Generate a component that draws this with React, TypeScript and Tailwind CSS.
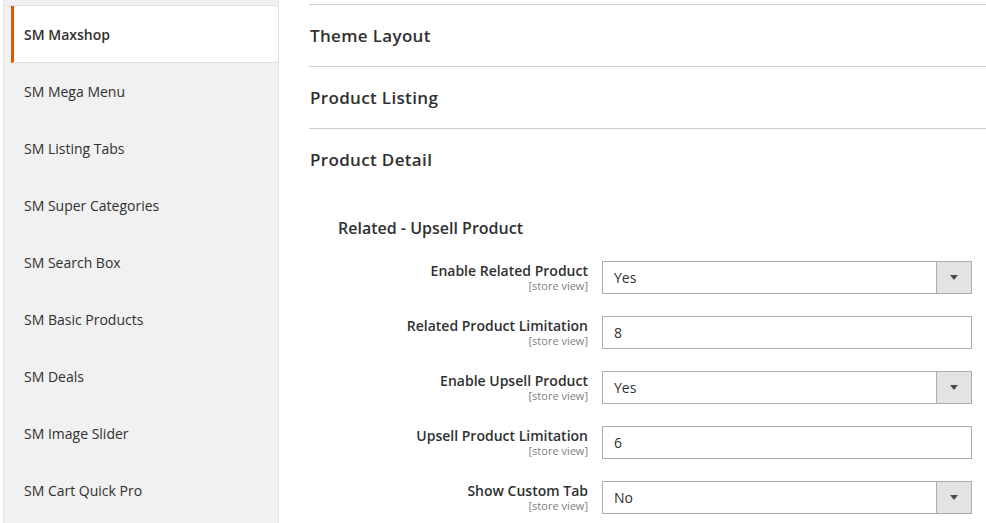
const tabs = [
  "SM Mega Menu",
  "SM Listing Tabs",
  "SM Super Categories",
  "SM Search Box",
  "SM Basic Products",
  "SM Deals",
  "SM Image Slider",
  "SM Cart Quick Pro",
];

const rows = [
  { label: "Enable Related Product", value: "Yes", select: true },
  { label: "Related Product Limitation", value: "8", select: false },
  { label: "Enable Upsell Product", value: "Yes", select: true },
  { label: "Upsell Product Limitation", value: "6", select: false },
  { label: "Show Custom Tab", value: "No", select: true },
];

function Field({ value, select }: { value: string; select: boolean }) {
  return (
    <div className="flex h-[33px] w-[370px] border border-[#adadad] bg-white">
      <div className="flex flex-1 items-center px-[11px] text-[14px] text-[#303030]">{value}</div>
      {select && (
        <div className="flex w-[35px] items-center justify-center border-l border-[#adadad] bg-[#e3e3e3]">
          <svg width="8" height="5" viewBox="0 0 8 5">
            <path d="M0 0h8L4 5z" fill="#514943" />
          </svg>
        </div>
      )}
    </div>
  );
}

export default function App() {
  return (
    <div
      className="flex h-[523px] w-[986px] overflow-hidden bg-white text-[#303030]"
      style={{ fontFamily: '"Open Sans", "DejaVu Sans", sans-serif' }}
    >
      {/* Sidebar tabs */}
      <div className="ml-[3px] flex w-[276px] shrink-0 flex-col border-x border-[#e3e3e3] bg-[#f1f1f1]">
        <div className="h-[6px] border-b border-[#e3e3e3]" />
        <div className="ml-[7px] flex h-[57px] items-center border-b border-l-[3px] border-[#e3e3e3] border-l-[#eb5202] bg-white pl-[10px] text-[14px] font-semibold">
          SM Maxshop
        </div>
        {tabs.map((t) => (
          <div key={t} className="flex h-[57px] shrink-0 items-center pl-[20px] text-[14px]">
            {t}
          </div>
        ))}
      </div>

      {/* Config content */}
      <div className="ml-[30px] flex-1">
        <div className="mt-[4px] border-t border-[#cccccc]">
          <div className="flex h-[62px] items-center border-b border-[#cccccc] pl-px text-[17px] font-semibold tracking-[0.02em]">
            Theme Layout
          </div>
          <div className="flex h-[62px] items-center border-b border-[#cccccc] pl-px text-[17px] font-semibold tracking-[0.02em]">
            Product Listing
          </div>
          <div className="flex h-[62px] items-center pl-px text-[17px] font-semibold tracking-[0.02em]">
            Product Detail
          </div>
        </div>

        <div className="pl-[29px] pt-[25px] text-[16px] font-semibold leading-[24px]">
          Related - Upsell Product
        </div>

        <div className="mt-[21px] flex flex-col gap-[22px]">
          {rows.map((r) => (
            <div key={r.label} className="flex items-start gap-[14px]">
              <div className="w-[279px] text-right">
                <div className="text-[14px] font-semibold leading-[19px]">{r.label}</div>
                <div className="text-[11px] leading-[12px] text-[#808080]">[store view]</div>
              </div>
              <Field value={r.value} select={r.select} />
            </div>
          ))}
        </div>
      </div>
    </div>
  );
}
